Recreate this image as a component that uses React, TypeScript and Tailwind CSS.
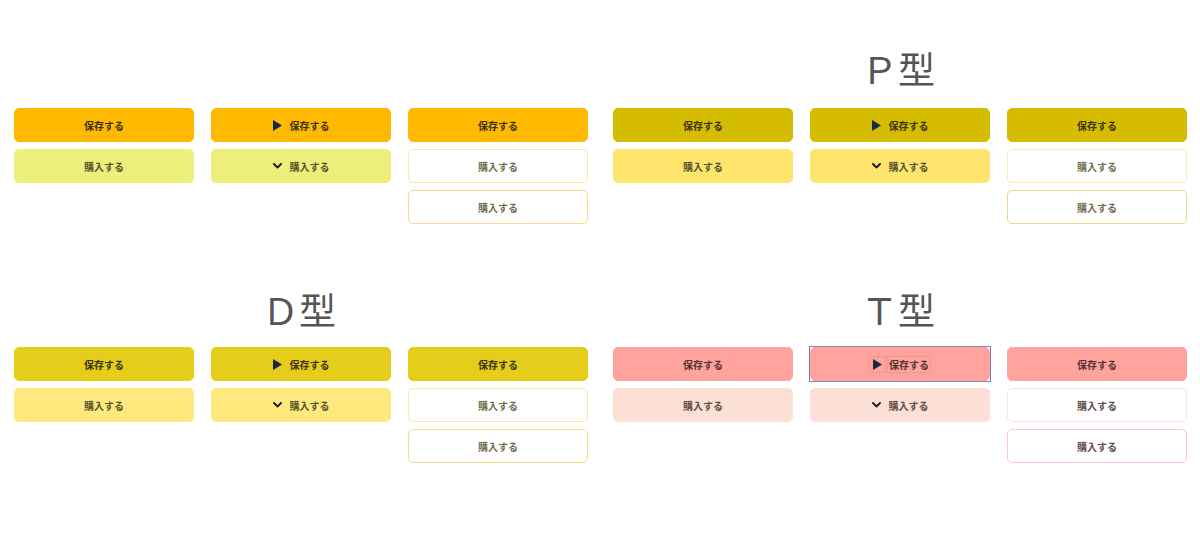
import React from "react";

type Theme = {
  save: string;
  buy: string;
  saveText: string;
  buyText: string;
  outline1: string;
  outline2: string;
  outlineText: string;
};

const Play = () => (
  <svg width="9" height="11" viewBox="0 0 9 11" className="shrink-0">
    <path d="M0 0 L9 5.5 L0 11 Z" fill="#1b2546" />
  </svg>
);

const Chevron = () => (
  <svg width="9" height="6" viewBox="0 0 9 6" className="shrink-0">
    <path d="M1 1 L4.5 4.5 L8 1" fill="none" stroke="#1b1b2b" strokeWidth="1.9" strokeLinecap="round" strokeLinejoin="round" />
  </svg>
);

const font = { fontFamily: '"Noto Sans CJK JP", "Noto Sans", sans-serif' } as const;

function Btn({
  bg,
  border,
  color,
  children,
  selected,
}: {
  bg: string;
  border: string;
  color: string;
  children: React.ReactNode;
  selected?: boolean;
}) {
  return (
    <div className="relative">
      <div
        className="h-[34px] w-[180px] rounded-[5px] border flex items-center justify-center gap-[8px] text-[10px] font-bold"
        style={{ background: bg, borderColor: border, color, ...font }}
      >
        {children}
      </div>
      {selected && <div className="absolute -inset-px border border-[#8282b6] pointer-events-none" />}
    </div>
  );
}

function Group({ t, title, selected, bottom }: { t: Theme; title?: string; selected?: boolean; bottom?: boolean }) {
  return (
    <div className="flex flex-col">
      <div
        className="h-[48px] flex items-center justify-center pr-[4px] text-[37px] leading-[48px] font-normal text-[#555555]"
        style={font}
      >
        {title ?? ""}
      </div>
      <div className={bottom ? "mt-[14px] flex gap-[17px]" : "mt-[16px] flex gap-[17px]"}>
        <div className="flex flex-col gap-[7px]">
          <Btn bg={t.save} border={t.save} color={t.saveText}>保存する</Btn>
          <Btn bg={t.buy} border={t.buy} color={t.buyText}>購入する</Btn>
        </div>
        <div className="flex flex-col gap-[7px]">
          <Btn bg={t.save} border={t.save} color={t.saveText} selected={selected}>
            {selected ? (
              <>
                <span className="flex items-center justify-center w-[15px] h-[15px] outline-1 outline-dotted outline-[#e58a8a]">
                  <Play />
                </span>
                <span className="-ml-[5px] outline-1 outline-dotted outline-[#e58a8a] px-[1px]">保存する</span>
              </>
            ) : (
              <>
                <Play />
                <span>保存する</span>
              </>
            )}
          </Btn>
          <Btn bg={t.buy} border={t.buy} color={t.buyText}>
            <Chevron />
            <span>購入する</span>
          </Btn>
        </div>
        <div className="flex flex-col gap-[7px]">
          <Btn bg={t.save} border={t.save} color={t.saveText}>保存する</Btn>
          <Btn bg="#ffffff" border={t.outline1} color={t.outlineText}>購入する</Btn>
          <Btn bg="#ffffff" border={t.outline2} color={t.outlineText}>購入する</Btn>
        </div>
      </div>
    </div>
  );
}

const base: Theme = {
  save: "#ffb900",
  buy: "#eeee7c",
  saveText: "#3b3412",
  buyText: "#55532a",
  outline1: "#f8eba0",
  outline2: "#fcd985",
  outlineText: "#6e6b4c",
};
const pType: Theme = {
  save: "#d6bc00",
  buy: "#ffe56e",
  saveText: "#3b3412",
  buyText: "#55532a",
  outline1: "#f9eca8",
  outline2: "#ecd67e",
  outlineText: "#6e6b4c",
};
const dType: Theme = {
  save: "#e6cd1b",
  buy: "#ffe97e",
  saveText: "#3b3412",
  buyText: "#55532a",
  outline1: "#faeaa0",
  outline2: "#f4df84",
  outlineText: "#6e6b4c",
};
const tType: Theme = {
  save: "#ffa39c",
  buy: "#fde0d5",
  saveText: "#553434",
  buyText: "#5c4a44",
  outline1: "#fde2da",
  outline2: "#fcc8c8",
  outlineText: "#5c4a44",
};

export default function App() {
  return (
    <div className="w-[1200px] h-[540px] bg-white overflow-hidden">
      <div className="pl-[14px] pt-[44px] grid grid-cols-[574px_574px] gap-x-[25px] gap-y-[61px]">
        <Group t={base} />
        <Group t={pType} title="Ｐ型" />
        <Group t={dType} title="Ｄ型" bottom />
        <Group t={tType} title="Ｔ型" selected bottom />
      </div>
    </div>
  );
}
